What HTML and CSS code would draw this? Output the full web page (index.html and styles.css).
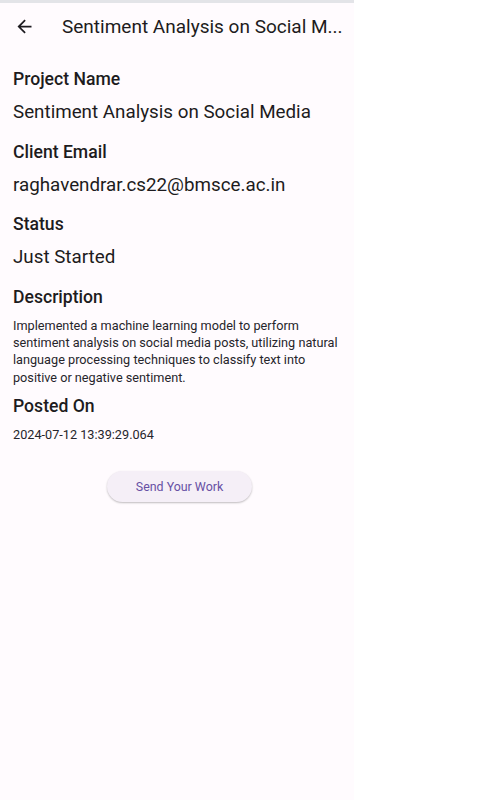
FILE: index.html
```html
<!DOCTYPE html>
<html>
<head>
<meta charset="utf-8">
<link rel="stylesheet" href="styles.css">
</head>
<body>
<div class="app">
  <div class="status"></div>
  <header class="appbar">
    <button class="back" aria-label="Back">
      <svg width="21" height="21" viewBox="0 0 24 24"><path d="M20 11H7.83l5.59-5.59L12 4l-8 8 8 8 1.41-1.41L7.83 13H20v-2z" fill="#1d1b20"/></svg>
    </button>
    <div class="title">Sentiment Analysis on Social M...</div>
  </header>
  <main class="content">
    <div class="label">Project Name</div>
    <div class="value">Sentiment Analysis on Social Media</div>
    <div class="label">Client Email</div>
    <div class="value">raghavendrar.cs22@bmsce.ac.in</div>
    <div class="label">Status</div>
    <div class="value">Just Started</div>
    <div class="label">Description</div>
    <div class="desc">Implemented a machine learning model to perform sentiment analysis on social media posts, utilizing natural language processing techniques to classify text into positive or negative sentiment.</div>
    <div class="label label-small-gap">Posted On</div>
    <div class="desc date">2024-07-12 13:39:29.064</div>
    <div class="actions">
      <button class="send">Send Your Work</button>
    </div>
  </main>
</div>
</body>
</html>
```
FILE: styles.css
```css
html, body {
  margin: 0;
  padding: 0;
  background: #ffffff;
}
body {
  font-family: Roboto, "Noto Sans", sans-serif;
  color: #1d1b20;
}
.app {
  width: 354px;
  height: 800px;
  background: #fffbfe;
  display: flex;
  flex-direction: column;
}
.status {
  height: 3px;
  background: #e3e4e8;
}
.appbar {
  height: 47px;
  display: flex;
  align-items: center;
  padding: 0 8px 0 12px;
}
.back {
  width: 24px;
  height: 24px;
  padding: 0;
  border: 0;
  background: none;
  display: flex;
  align-items: center;
  justify-content: center;
}
.title {
  margin-left: 26px;
  font-size: 19px;
  line-height: 28px;
  white-space: nowrap;
  flex: 1;
  min-width: 0;
}
.content {
  padding: 17px 8px 0 13px;
  display: flex;
  flex-direction: column;
}
.label {
  font-size: 17.6px;
  font-weight: 500;
  line-height: 24px;
  margin-top: 13.5px;
}
.label:first-child {
  margin-top: 0;
}
.label-small-gap {
  margin-top: 8px;
}
.value {
  font-size: 18.8px;
  line-height: 28px;
  margin-top: 7px;
}
.desc {
  font-size: 12.7px;
  line-height: 17.4px;
  margin-top: 8px;
  color: #26252b;
}
.date {
  margin-top: 8px;
}
.actions {
  display: flex;
  justify-content: center;
  margin-top: 27px;
}
.send {
  width: 145px;
  height: 31px;
  border: 0;
  border-radius: 16px;
  background: #f5eff7;
  color: #6750a4;
  font-family: Roboto, sans-serif;
  font-size: 12.4px;
  box-shadow: 0 1px 2px rgba(0,0,0,0.25);
  padding: 0;
}
```
